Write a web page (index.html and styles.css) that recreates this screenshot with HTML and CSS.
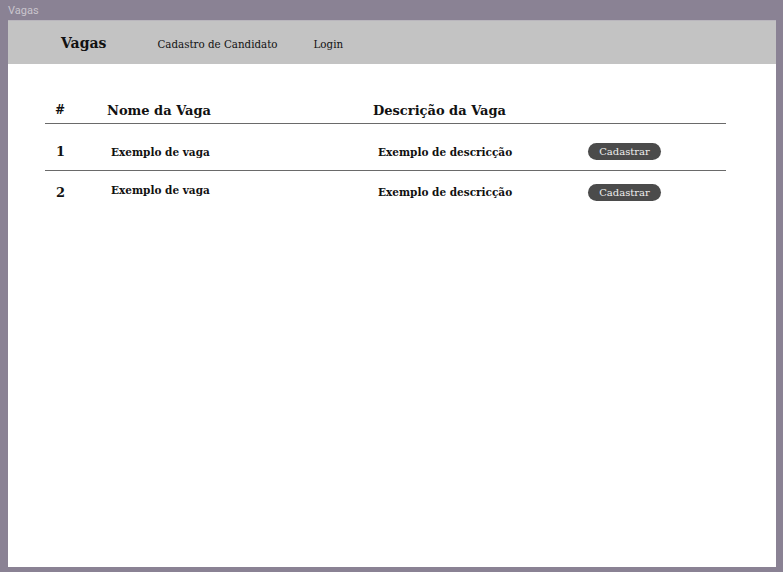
FILE: index.html
```html
<!DOCTYPE html>
<html lang="pt">
<head>
<meta charset="utf-8">
<title>Vagas</title>
<link rel="stylesheet" href="styles.css">
</head>
<body>
<div class="titlebar">Vagas</div>
<div class="window">
  <nav class="nav">
    <span class="brand">Vagas</span>
    <a class="nav-link link-cad">Cadastro de Candidato</a>
    <a class="nav-link">Login</a>
  </nav>
  <main class="content">
    <div class="table">
      <div class="row head">
        <div class="c-num">#</div>
        <div class="c-name">Nome da Vaga</div>
        <div class="c-desc">Descrição da Vaga</div>
        <div class="c-act"></div>
      </div>
      <div class="row item first">
        <div class="c-num">1</div>
        <div class="c-name">Exemplo de vaga</div>
        <div class="c-desc">Exemplo de descricção</div>
        <div class="c-act"><button class="btn">Cadastrar</button></div>
      </div>
      <div class="row item second">
        <div class="c-num">2</div>
        <div class="c-name">Exemplo de vaga</div>
        <div class="c-desc">Exemplo de descricção</div>
        <div class="c-act"><button class="btn">Cadastrar</button></div>
      </div>
    </div>
  </main>
</div>
</body>
</html>
```

FILE: styles.css
```css
* { box-sizing: border-box; }
html, body { margin: 0; padding: 0; }
body {
  width: 783px;
  height: 572px;
  background: #8a8294;
  font-family: "DejaVu Serif", "Liberation Serif", serif;
  color: #111;
  overflow: hidden;
}
.titlebar {
  height: 20px;
  padding-left: 8px;
  font-family: "Roboto", "DejaVu Sans", sans-serif;
  font-size: 11px;
  line-height: 22px;
  color: #c9c5cd;
}
.window {
  margin: 0 7px 0 8px;
  height: 547px;
  background: #fff;
}
.nav {
  height: 44px;
  background: #c3c3c3;
  border-top: 1px solid #b9b6bd;
  display: flex;
  align-items: center;
  padding-left: 53px;
}
.brand {
  font-weight: bold;
  font-size: 14px;
  margin-right: 51px;
  padding-top: 1px;
}
.nav-link {
  font-size: 10.3px;
  color: #111;
  padding-top: 2px;
}
.link-cad { margin-right: 36px; }
.content {
  padding: 33px 50px 0 37px;
}
.table { width: 681px; }
.row {
  display: grid;
  grid-template-columns: 62px 266px 215px 1fr;
  align-items: center;
}
.head {
  height: 27px;
  border-bottom: 1px solid #6a6a6a;
  font-weight: bold;
  font-size: 13px;
}
.head .c-num { padding-left: 10px; font-size: 12px; }
.item {
  font-weight: bold;
  font-size: 10.5px;
}
.item.first { height: 47px; border-bottom: 1px solid #6a6a6a; padding-top: 9px; }
.item.second { height: 40px; padding-bottom: 2px; }
.item .c-num { padding-left: 11px; font-size: 13px; }
.item.second .c-num { padding-top: 5px; }
.item .c-name { padding-left: 4px; }
.item .c-desc { padding-left: 5px; }
.item.second .c-desc { padding-top: 3px; }
.item.second .c-act { padding-top: 5px; }
.btn {
  display: block;
  width: 73px;
  height: 17px;
  border: none;
  border-radius: 9px;
  background: #4b4b4b;
  color: #eee;
  font-family: "DejaVu Serif", "Liberation Serif", serif;
  font-size: 10px;
  padding: 0;
  line-height: 17px;
}
```
